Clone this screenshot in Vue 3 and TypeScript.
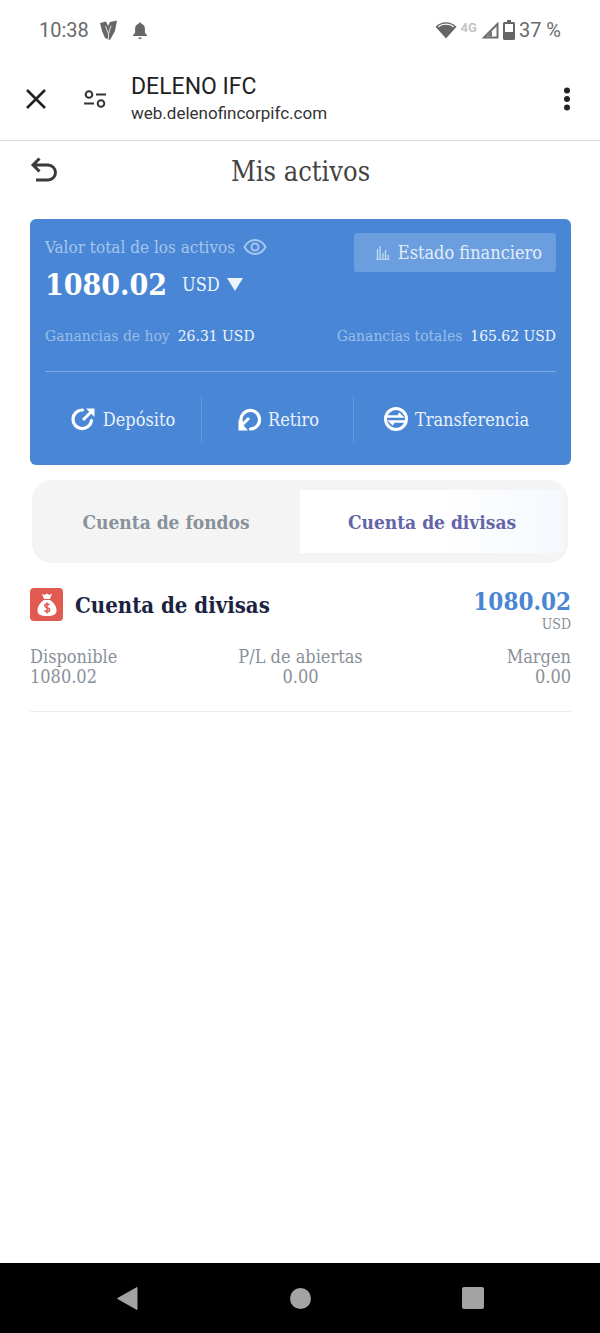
<template>
  <div class="screen">
    <!-- Android status bar -->
    <div class="status-bar">
      <div class="status-left">
        <span class="clock">10:38</span>
        <svg class="status-logo" width="19" height="21" viewBox="0 0 19 21">
          <path d="M1 3 7 1.5 9 6 11 2 18 .5 16 11 11 20 6 18 3 11Z" fill="#666" />
          <path d="M6.5 6 9.5 14 12 5.5M9.5 14 9.5 19" stroke="#ddd" stroke-width="1" fill="none" />
        </svg>
        <svg class="status-bell" width="16" height="19" viewBox="0 0 16 19">
          <path d="M8 1.5c.8 0 1.3.5 1.3 1.3 2.4.6 3.6 2.6 3.6 5v4l2 2.2v.9H1.100v-.9l2-2.200v-4c0-2.400 1.200-4.400 3.600-5C6.700 2 7.200 1.500 8 1.500Z" fill="#666" />
          <path d="M6.300 16.500h3.400a1.700 1.700 0 0 1-3.400 0Z" fill="#666" />
        </svg>
      </div>
      <div class="status-right">
        <svg width="22" height="18" viewBox="0 0 22 18">
          <path d="M11 17.500 .5 5.800C3.300 3 7 1.300 11 1.300s7.700 1.700 10.500 4.500Z" fill="#666" />
          <path d="M3.300 5.700C5.400 4 8 3.200 11 3.200s5.600.8 7.700 2.500" stroke="#fff" stroke-width="1.200" fill="none" />
        </svg>
        <span class="net">4G</span>
        <svg width="18" height="18" viewBox="0 0 18 18">
          <path d="M17.500 .5V17.500H.5Z" fill="#6f6f6f" />
          <path d="M15.500 5.500V15.500H5.500Z" fill="#fff" />
          <path d="M11 10V15.500H5.500Z" fill="#6f6f6f" />
        </svg>
        <svg width="12" height="20" viewBox="0 0 12 20">
          <path d="M4 0h4v2h2.500c.8 0 1.500.7 1.500 1.500v15c0 .8-.7 1.500-1.500 1.500h-9C.7 20 0 19.300 0 18.500v-15C0 2.700.7 2 1.500 2H4Z" fill="#666" />
          <path d="M2 4h8v8H2Z" fill="#fff" />
        </svg>
        <span class="battery">37 %</span>
      </div>
    </div>

    <!-- Custom tab toolbar -->
    <div class="browser-bar">
      <svg class="close-icon" width="22" height="22" viewBox="0 0 22 22">
        <path d="M2 2 20 20M20 2 2 20" stroke="#222" stroke-width="2.600" />
      </svg>
      <svg class="tune-icon" width="24" height="20" viewBox="0 0 24 20">
        <circle cx="6" cy="5.500" r="3.300" fill="none" stroke="#333" stroke-width="2" />
        <path d="M13 5.500H23M1 14.500H11" stroke="#333" stroke-width="2.200" />
        <circle cx="18" cy="14.500" r="3.300" fill="none" stroke="#333" stroke-width="2" />
      </svg>
      <div class="site">
        <div class="site-name">DELENO IFC</div>
        <div class="site-url">web.delenofincorpifc.com</div>
      </div>
      <svg class="more-icon" width="8" height="24" viewBox="0 0 8 24">
        <circle cx="4" cy="3.500" r="3" fill="#222" />
        <circle cx="4" cy="12" r="3" fill="#222" />
        <circle cx="4" cy="20.500" r="3" fill="#222" />
      </svg>
    </div>

    <!-- Page -->
    <main class="page">
      <header class="page-header">
        <svg class="back-icon" width="28" height="28" viewBox="0 0 28 28">
          <path d="M9.500 2.500 3 9l6.500 6.500M3.500 9H18a7 7 0 0 1 0 15H6" fill="none" stroke="#3a3a3a" stroke-width="3" />
        </svg>
        <h1>Mis activos</h1>
      </header>

      <section class="asset-card">
        <div class="card-top">
          <div>
            <div class="total-label">
              Valor total de los activos
              <svg width="24" height="18" viewBox="0 0 24 18">
                <path d="M1.500 9C4 4.300 7.500 2 12 2s8 2.300 10.500 7c-2.500 4.700-6 7-10.500 7S4 13.700 1.500 9Z" fill="none" stroke="#a6c5ec" stroke-width="2" />
                <circle cx="12" cy="9" r="3.500" fill="none" stroke="#a6c5ec" stroke-width="2" />
              </svg>
            </div>
            <div class="total-value">
              <strong>1080.02</strong>
              <span class="currency">USD</span>
              <span class="caret"></span>
            </div>
          </div>
          <button class="statement-btn" type="button">
            <svg width="15" height="15" viewBox="0 0 15 15">
              <path d="M1 14.300H14.500" stroke="#c7daf3" stroke-width="1" />
              <path d="M2.500 14V4M5 14V1M8 14V8M10.500 14V5M13 14V10" stroke="#c7daf3" stroke-width="1.300" />
            </svg>
            Estado financiero
          </button>
        </div>

        <div class="earnings">
          <div><span class="muted">Ganancias de hoy</span><span class="amount">26.31 USD</span></div>
          <div><span class="muted">Ganancias totales</span><span class="amount">165.62 USD</span></div>
        </div>

        <div class="actions">
          <div class="action action-deposit">
            <svg width="26" height="26" viewBox="0 0 26 26">
              <path d="M20.500 14.500A9.300 9.300 0 1 1 11.500 4" fill="none" stroke="#fff" stroke-width="3.200" stroke-linecap="round" />
              <path d="M12 14 21 5" stroke="#fff" stroke-width="3" />
              <path d="M15 2.500H23.500V11Z" fill="#fff" />
            </svg>
            Depósito
          </div>
          <div class="action action-withdraw">
            <svg width="26" height="26" viewBox="0 0 26 26">
              <path d="M6 18A9.300 9.300 0 1 1 14.500 23" fill="none" stroke="#fff" stroke-width="3.200" stroke-linecap="round" />
              <path d="M13 12 5 20" stroke="#fff" stroke-width="3" />
              <path d="M2.500 13.500V24.500H12Z" fill="#fff" />
            </svg>
            Retiro
          </div>
          <div class="action action-transfer">
            <svg width="26" height="26" viewBox="0 0 26 26">
              <circle cx="13" cy="13" r="10.500" fill="none" stroke="#fff" stroke-width="3" />
              <path d="M2 10.500H18.500L15.500 7.500M24 15.500H7.500L10.500 18.500" fill="none" stroke="#fff" stroke-width="2.600" />
            </svg>
            Transferencia
          </div>
        </div>
      </section>

      <div class="tabs">
        <div class="tab">Cuenta de fondos</div>
        <div class="tab tab-active">Cuenta de divisas</div>
      </div>

      <section class="account">
        <div class="account-head">
          <div class="account-title">
            <span class="bag-badge">
              <svg width="22" height="26" viewBox="0 0 22 26">
                <path d="M6 1.500 8.500 3 11 1.500 13.500 3 16 1.500 14 7H8Z" fill="#fff" />
                <path d="M8 8h6c4 2.600 6.500 6.500 6.500 10.500 0 4-3 5.500-9.500 5.500s-9.500-1.500-9.500-5.500C1.500 14.500 4 10.600 8 8Z" fill="#fff" />
                <path d="M13.500 13c-.6-.8-1.500-1.100-2.500-1.100-1.300 0-2.300.7-2.300 1.900 0 2.500 5 1.300 5 3.900 0 1.200-1.100 1.900-2.500 1.900-1.100 0-2.100-.4-2.800-1.200M11 10.500v11" fill="none" stroke="#e05a52" stroke-width="1.500" />
              </svg>
            </span>
            <h2>Cuenta de divisas</h2>
          </div>
          <div class="account-balance">
            <strong>1080.02</strong>
            <span>USD</span>
          </div>
        </div>
        <div class="stats">
          <div class="stat"><span>Disponible</span><span>1080.02</span></div>
          <div class="stat stat-center"><span>P/L de abiertas</span><span>0.00</span></div>
          <div class="stat stat-end"><span>Margen</span><span>0.00</span></div>
        </div>
      </section>
    </main>

    <!-- Android nav bar -->
    <nav class="nav-bar">
      <svg width="22" height="25" viewBox="0 0 22 25">
        <path d="M21 1.500V23.500L1.500 12.500Z" fill="#a3a3a3" stroke="#a3a3a3" stroke-linejoin="round" />
      </svg>
      <span class="nav-home"></span>
      <span class="nav-recent"></span>
    </nav>
  </div>
</template>

<script setup lang="ts">
</script>

<style>
html,
body {
  margin: 0;
  background: #fff;
}
</style>

<style scoped>
.screen {
  width: 600px;
  height: 1333px;
  display: flex;
  flex-direction: column;
  background: #fff;
  overflow: hidden;
}

.status-bar {
  height: 60px;
  flex: none;
  display: flex;
  align-items: center;
  justify-content: space-between;
  padding: 0 39px 0 39px;
  box-sizing: border-box;
  font-family: Roboto, sans-serif;
  color: #6a6a6a;
}

.status-left,
.status-right {
  display: flex;
  align-items: center;
}

.clock {
  font-size: 20px;
}

.status-logo {
  margin-left: 10px;
}

.status-bell {
  margin-left: 14px;
}

.status-right {
  gap: 4px;
}

.net {
  font-size: 13px;
  font-weight: 700;
  color: #c4c4c4;
  margin-top: -5px;
}

.battery {
  font-size: 20px;
}

.browser-bar {
  height: 81px;
  flex: none;
  box-sizing: border-box;
  display: flex;
  align-items: center;
  padding: 0 29px 2px 25px;
  border-bottom: 1px solid #dcdcdc;
  font-family: Roboto, sans-serif;
}

.tune-icon {
  margin-left: 36px;
}

.site {
  margin-left: 24px;
  flex: 1;
}

.site-name {
  font-size: 23px;
  line-height: 28px;
  color: #222;
}

.site-url {
  font-size: 17px;
  line-height: 24px;
  color: #333;
}

.page {
  flex: 1;
  padding: 0 29px 0 30px;
  font-family: "DejaVu Serif", serif;
  font-stretch: condensed;
}

.page-header {
  height: 60px;
  display: flex;
  align-items: center;
  justify-content: center;
  position: relative;
}

.back-icon {
  position: absolute;
  left: 0;
  top: 15px;
}

h1 {
  margin: 0;
  font-size: 27px;
  font-weight: 400;
  color: #444;
}

.asset-card {
  margin-top: 18px;
  height: 246px;
  box-sizing: border-box;
  padding: 14px 15px 14px;
  border-radius: 6px;
  background: #4987d6;
  color: #fff;
  display: flex;
  flex-direction: column;
}

.card-top {
  display: flex;
  justify-content: space-between;
  align-items: flex-start;
}

.total-label {
  display: flex;
  align-items: center;
  gap: 8px;
  height: 28px;
  font-size: 17px;
  color: #a6c5ec;
}

.total-value {
  display: flex;
  align-items: center;
  height: 38px;
  margin-top: 4px;
}

.total-value strong {
  font-size: 30px;
}

.currency {
  margin-left: 15px;
  font-size: 18px;
  color: #eef4fc;
}

.caret {
  margin-left: 7px;
  width: 0;
  height: 0;
  border-left: 8px solid transparent;
  border-right: 8px solid transparent;
  border-top: 13px solid #eef4fc;
}

.statement-btn {
  height: 39px;
  padding: 0 14px 0 21px;
  display: flex;
  align-items: center;
  gap: 8px;
  border: 0;
  border-radius: 3px;
  background: #6b9ede;
  color: #e3edf9;
  font-family: inherit;
  font-stretch: inherit;
  font-size: 18px;
}

.earnings {
  margin-top: 20px;
  height: 25px;
  display: flex;
  justify-content: space-between;
  align-items: center;
  font-size: 15.500px;
}

.muted {
  color: #9bbde9;
  margin-right: 8px;
}

.amount {
  color: #f1f6fc;
}

.actions {
  margin-top: 23px;
  padding-top: 24px;
  border-top: 1px solid #7aa8e2;
  display: grid;
  grid-template-columns: 157px 152px 1fr;
  height: 46px;
  font-size: 18px;
  color: #eaf1fb;
}

.action {
  display: flex;
  align-items: center;
  justify-content: center;
  gap: 6px;
  border-right: 1px solid #6197dc;
}

.action-transfer {
  border-right: 0;
  padding-left: 2px;
}

.tabs {
  margin: 15px 3px 0 2px;
  height: 83px;
  box-sizing: border-box;
  padding: 10px 0;
  display: grid;
  grid-template-columns: 1fr 1fr;
  border-radius: 20px;
  background: #f4f4f5;
  font-size: 19px;
  font-weight: 700;
}

.tab {
  display: flex;
  align-items: center;
  justify-content: center;
  color: #87929c;
  padding-right: 0;
}

.tab-active {
  margin-right: 4px;
  color: #6464a8;
  background: linear-gradient(90deg, #fff 55%, #f4f8fd 100%);
}

.account {
  padding-bottom: 24px;
  border-bottom: 1px solid #eeeeee;
}

.account-head {
  margin-top: 25px;
  display: flex;
  justify-content: space-between;
  align-items: flex-start;
}

.account-title {
  display: flex;
  align-items: center;
  gap: 12px;
}

.bag-badge {
  width: 33px;
  height: 33px;
  border-radius: 4px;
  background: #e05a52;
  display: flex;
  align-items: center;
  justify-content: center;
}

h2 {
  margin: 0;
  font-size: 22px;
  font-weight: 700;
  color: #1b2340;
}

.account-balance {
  display: flex;
  flex-direction: column;
  align-items: flex-end;
  color: #8a8f96;
  font-size: 14px;
  line-height: 16px;
}

.account-balance strong {
  font-size: 24px;
  line-height: 28px;
  color: #4a86d2;
}

.stats {
  margin-top: 15px;
  display: grid;
  grid-template-columns: 1fr 1fr 1fr;
  font-size: 18px;
  line-height: 20px;
  color: #8a9099;
}

.stat {
  display: flex;
  flex-direction: column;
}

.stat-center {
  align-items: center;
}

.stat-end {
  align-items: flex-end;
}

.nav-bar {
  height: 70px;
  flex: none;
  background: #000;
  display: flex;
  align-items: center;
  padding: 0 116px;
  justify-content: space-between;
}

.nav-home {
  width: 21px;
  height: 21px;
  border-radius: 50%;
  background: #a3a3a3;
}

.nav-recent {
  width: 22px;
  height: 22px;
  border-radius: 2px;
  background: #a3a3a3;
}
</style>
